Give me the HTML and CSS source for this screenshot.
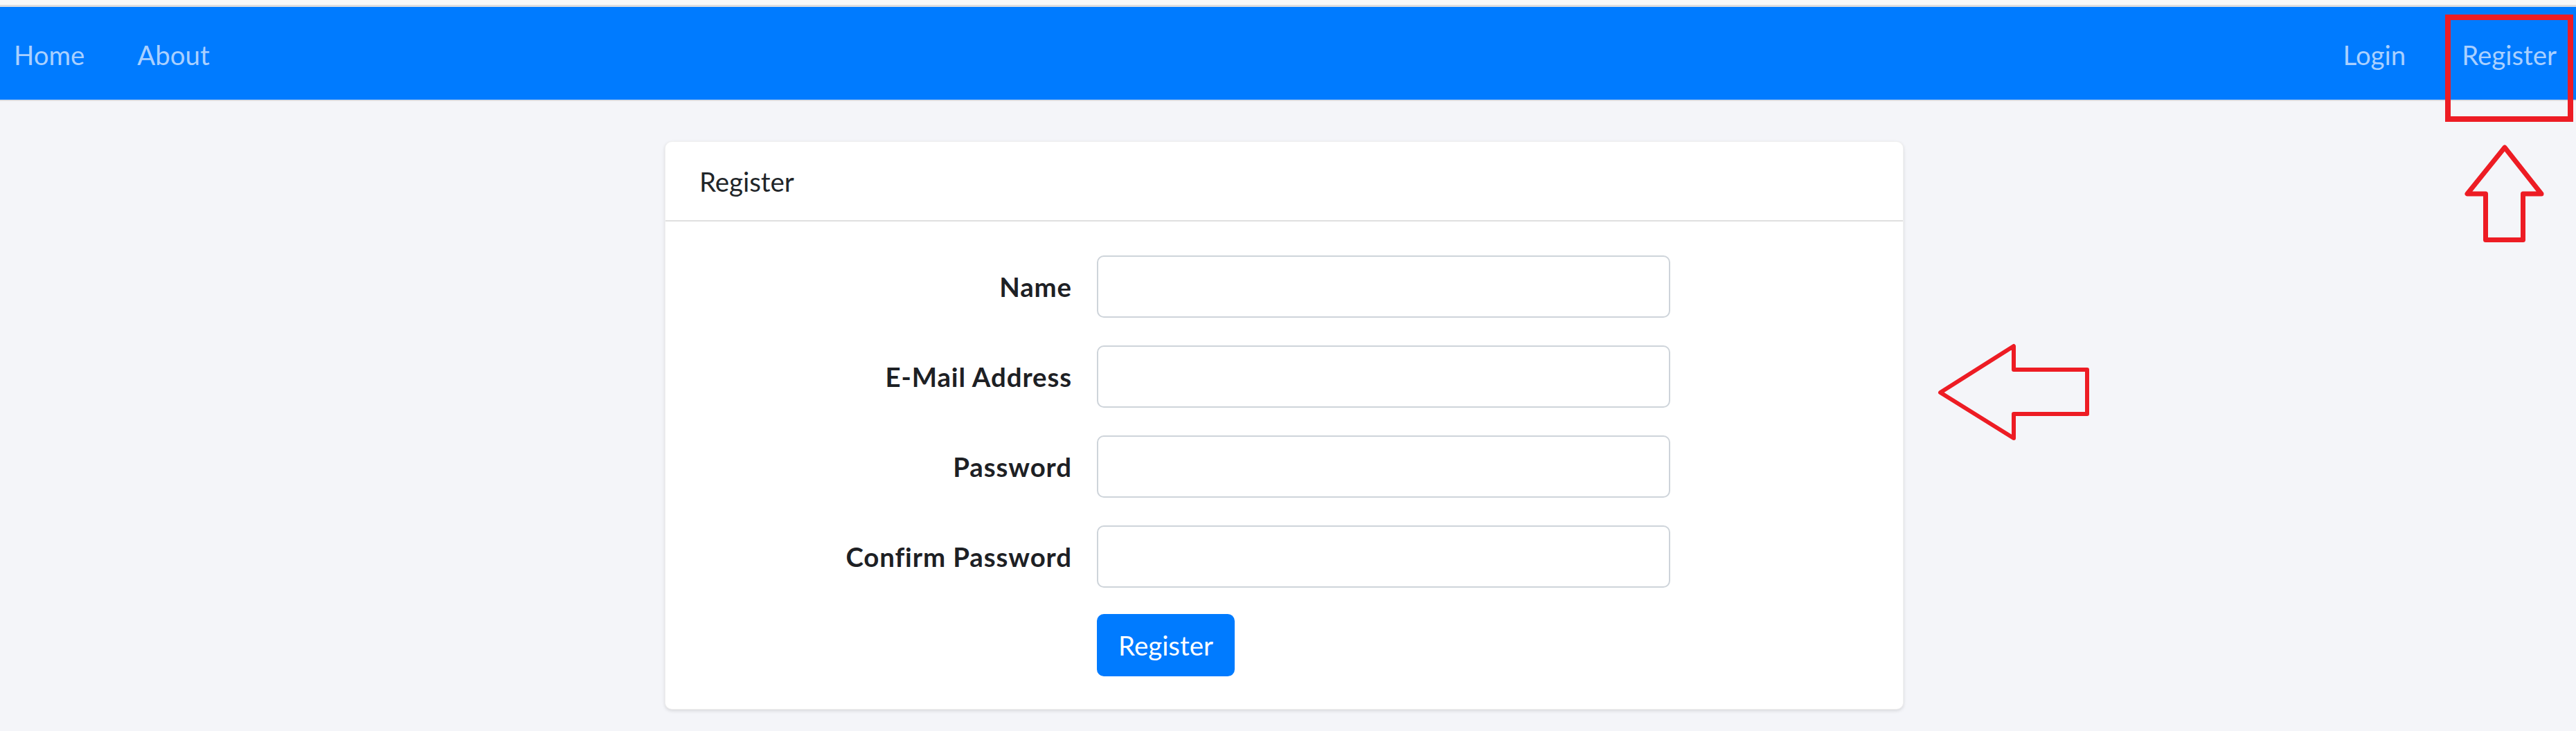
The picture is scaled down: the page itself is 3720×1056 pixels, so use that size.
FILE: index.html
```html
<!DOCTYPE html>
<html lang="en">
<head>
<meta charset="utf-8">
<title>Register</title>
<link rel="stylesheet" href="styles.css">
</head>
<body>
<div class="chrome-strip"></div>
<nav class="navbar">
  <div class="nav-group nav-left">
    <a class="nav-link" href="#">Home</a>
    <a class="nav-link" href="#">About</a>
  </div>
  <div class="nav-group nav-right">
    <a class="nav-link" href="#">Login</a>
    <a class="nav-link" href="#">Register</a>
  </div>
</nav>
<main class="page">
  <section class="card">
    <div class="card-header">Register</div>
    <form class="card-body">
      <label class="form-label" for="name">Name</label>
      <input class="form-input" id="name" type="text">
      <label class="form-label" for="email">E-Mail Address</label>
      <input class="form-input" id="email" type="email">
      <label class="form-label" for="password">Password</label>
      <input class="form-input" id="password" type="password">
      <label class="form-label" for="confirm">Confirm Password</label>
      <input class="form-input" id="confirm" type="password">
      <div class="btn-cell"><button class="btn-primary" type="button">Register</button></div>
    </form>
  </section>
</main>
<svg class="annotations" width="3720" height="1056" viewBox="0 0 3720 1056" xmlns="http://www.w3.org/2000/svg">
  <rect x="3535" y="25" width="177" height="147" fill="none" stroke="#ed1c24" stroke-width="8"/>
  <polygon points="3617,213 3563,280 3589.5,280 3589.5,346.5 3643.5,346.5 3643.5,280 3670,280" fill="none" stroke="#ed1c24" stroke-width="7" stroke-linejoin="round"/>
  <polygon points="2802,567 2908,500 2908,534 3014,534 3014,598 2908,598 2908,633" fill="none" stroke="#ed1c24" stroke-width="6" stroke-linejoin="round"/>
</svg>
</body>
</html>
```
FILE: styles.css
```css
* { box-sizing: border-box; }
html, body { margin: 0; padding: 0; }
body {
  width: 3720px;
  height: 1056px;
  overflow: hidden;
  position: relative;
  background: #f4f5f9;
  font-family: Lato, "Open Sans", sans-serif;
  font-size: 38.4px;
  color: #212529;
}
.chrome-strip {
  height: 10px;
  background: #f8f8f8;
  border-bottom: 3px solid #dcdde0;
}
.navbar {
  height: 134px;
  background: #007bff;
  display: flex;
  justify-content: space-between;
  align-items: center;
  padding-top: 4px;
}
.nav-group { display: flex; align-items: center; }
.nav-left { padding-left: 20px; gap: 76px; }
.nav-right { padding-right: 28px; gap: 81px; }
.nav-link {
  color: #a9d0ff;
  text-decoration: none;
  line-height: 46px;
}
.page {
  border-top: 2px solid #dcdde2;
  display: flex;
  justify-content: center;
  padding: 58px 11px 0 0;
}
.card {
  width: 1789px;
  background: #fff;
  border: 1px solid rgba(0, 0, 0, 0.06);
  border-radius: 10px;
  box-shadow: 0 2px 5px rgba(0, 0, 0, 0.12);
}
.card-header {
  padding: 34px 49px 33px;
  line-height: 46px;
  border-bottom: 2px solid #dfdfdf;
}
.card-body {
  display: grid;
  grid-template-columns: 538px 828px;
  column-gap: 36px;
  row-gap: 40px;
  align-items: center;
  padding: 49px 49px 47px;
}
.form-label {
  text-align: right;
  font-weight: 700;
  line-height: 46px;
  letter-spacing: 0.9px;
  color: #1d2024;
}
.form-input {
  height: 90px;
  border: 2px solid #ced4da;
  border-radius: 10px;
  background: #fff;
  font: inherit;
}
.btn-cell {
  grid-column: 2;
  margin-top: -2px;
}
.btn-primary {
  width: 199px;
  height: 90px;
  border: 0;
  border-radius: 10px;
  background: #007bff;
  color: #fff;
  font: inherit;
  padding: 0;
}
.annotations {
  position: absolute;
  top: 0;
  left: 0;
  pointer-events: none;
}
```
